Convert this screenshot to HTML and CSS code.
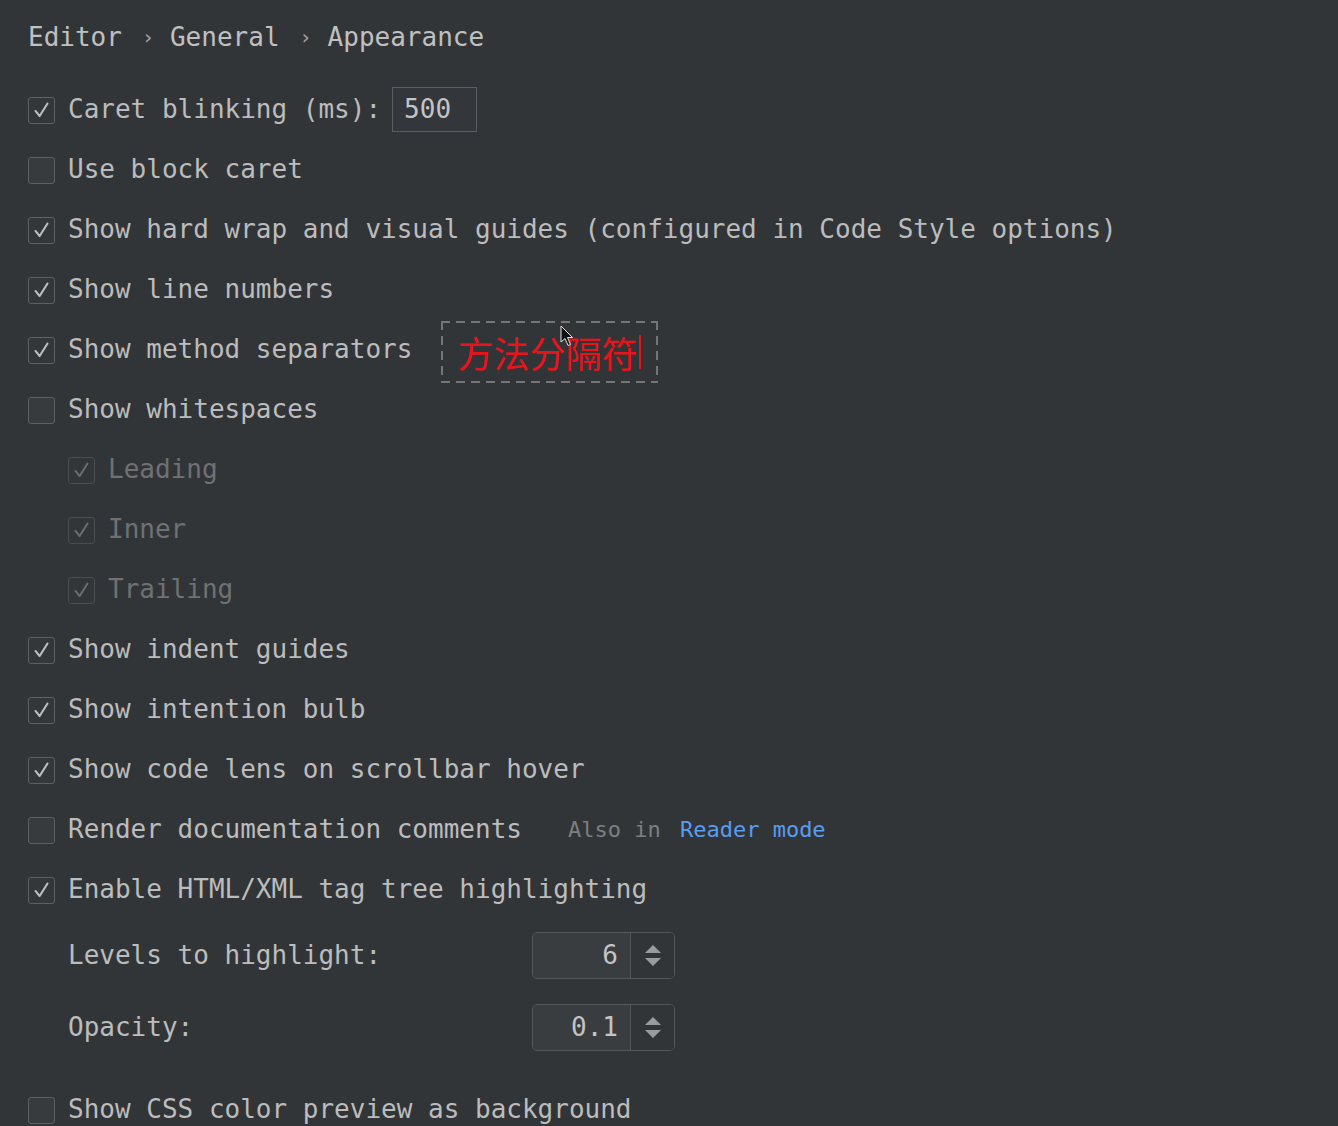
FILE: index.html
```html
<!DOCTYPE html>
<html>
<head>
<meta charset="utf-8">
<link rel="stylesheet" href="styles.css">
</head>
<body>
<div class="page">
  <div class="crumbs">
    <span>Editor</span><span class="sep">›</span><span>General</span><span class="sep">›</span><span>Appearance</span>
  </div>

  <div class="row">
    <span class="cb on"><svg viewBox="0 0 27 27"><polyline points="7,14 11.5,19.5 20,6"/></svg></span>
    <span class="lbl">Caret blinking (ms):</span>
    <span class="field">500</span>
  </div>
  <div class="row">
    <span class="cb"></span>
    <span class="lbl">Use block caret</span>
  </div>
  <div class="row">
    <span class="cb on"><svg viewBox="0 0 27 27"><polyline points="7,14 11.5,19.5 20,6"/></svg></span>
    <span class="lbl">Show hard wrap and visual guides (configured in Code Style options)</span>
  </div>
  <div class="row">
    <span class="cb on"><svg viewBox="0 0 27 27"><polyline points="7,14 11.5,19.5 20,6"/></svg></span>
    <span class="lbl">Show line numbers</span>
  </div>
  <div class="row">
    <span class="cb on"><svg viewBox="0 0 27 27"><polyline points="7,14 11.5,19.5 20,6"/></svg></span>
    <span class="lbl">Show method separators</span>
    <span class="note">方法分隔符<span class="caret"></span>
      <svg class="pointer" viewBox="0 0 14 22"><path d="M1 1 L1 17 L5 13.5 L8 20.5 L10.5 19.5 L7.5 12.5 L12.5 12.5 Z"/></svg>
    </span>
  </div>
  <div class="row">
    <span class="cb"></span>
    <span class="lbl">Show whitespaces</span>
  </div>
  <div class="row sub dis">
    <span class="cb on"><svg viewBox="0 0 27 27"><polyline points="7,14 11.5,19.5 20,6"/></svg></span>
    <span class="lbl">Leading</span>
  </div>
  <div class="row sub dis">
    <span class="cb on"><svg viewBox="0 0 27 27"><polyline points="7,14 11.5,19.5 20,6"/></svg></span>
    <span class="lbl">Inner</span>
  </div>
  <div class="row sub dis">
    <span class="cb on"><svg viewBox="0 0 27 27"><polyline points="7,14 11.5,19.5 20,6"/></svg></span>
    <span class="lbl">Trailing</span>
  </div>
  <div class="row">
    <span class="cb on"><svg viewBox="0 0 27 27"><polyline points="7,14 11.5,19.5 20,6"/></svg></span>
    <span class="lbl">Show indent guides</span>
  </div>
  <div class="row">
    <span class="cb on"><svg viewBox="0 0 27 27"><polyline points="7,14 11.5,19.5 20,6"/></svg></span>
    <span class="lbl">Show intention bulb</span>
  </div>
  <div class="row">
    <span class="cb on"><svg viewBox="0 0 27 27"><polyline points="7,14 11.5,19.5 20,6"/></svg></span>
    <span class="lbl">Show code lens on scrollbar hover</span>
  </div>
  <div class="row">
    <span class="cb"></span>
    <span class="lbl">Render documentation comments</span>
    <span class="also">Also in <span class="link">Reader mode</span></span>
  </div>
  <div class="row">
    <span class="cb on"><svg viewBox="0 0 27 27"><polyline points="7,14 11.5,19.5 20,6"/></svg></span>
    <span class="lbl">Enable HTML/XML tag tree highlighting</span>
  </div>

  <div class="row spin-row">
    <span class="spin-lbl">Levels to highlight:</span>
    <span class="spinner">
      <span class="spin-val">6</span>
      <span class="spin-btn"><span class="up"></span><span class="down"></span></span>
    </span>
  </div>
  <div class="row spin-row">
    <span class="spin-lbl">Opacity:</span>
    <span class="spinner">
      <span class="spin-val">0.1</span>
      <span class="spin-btn"><span class="up"></span><span class="down"></span></span>
    </span>
  </div>

  <div class="row last">
    <span class="cb"></span>
    <span class="lbl">Show CSS color preview as background</span>
  </div>
</div>
</body>
</html>
```

FILE: styles.css
```css
html, body {
  margin: 0;
  padding: 0;
  background: #323538;
}
body {
  width: 1338px;
  height: 1126px;
  overflow: hidden;
  font-family: "DejaVu Sans Mono", "Liberation Mono", monospace;
  font-size: 26px;
  color: #bcbcbc;
}
.page {
  padding-left: 28px;
}
.crumbs {
  height: 72px;
  padding-top: 1px;
  margin-bottom: 6px;
  display: flex;
  align-items: center;
  color: #c0c0c0;
}
.crumbs .sep {
  font-size: 20px;
  color: #a0a0a0;
  margin: 0 16px 0 20px;
}
.row {
  height: 60px;
  display: flex;
  align-items: center;
}
.cb {
  width: 27px;
  height: 27px;
  box-sizing: border-box;
  border: 1.5px solid #5e6164;
  border-radius: 3px;
  background: #383b3e;
  flex: none;
  display: flex;
  margin-top: 2px;
}
.cb.on {
  background: #34373a;
}
.cb svg {
  width: 100%;
  height: 100%;
}
.cb polyline {
  fill: none;
  stroke: #c0c0c0;
  stroke-width: 2.2;
  stroke-linecap: round;
  stroke-linejoin: round;
}
.lbl {
  margin-left: 13px;
  white-space: pre;
}
.sub {
  padding-left: 40px;
}
.dis .lbl {
  color: #6f7173;
}
.dis .cb {
  border-color: #4b4e51;
  background: #333639;
}
.dis .cb polyline {
  stroke: #6a6c6e;
}
.field {
  margin-left: 11px;
  width: 85px;
  height: 45px;
  box-sizing: border-box;
  border: 1.5px solid #5c5f62;
  background: #33363a;
  padding-left: 11px;
  display: flex;
  align-items: center;
  color: #c4c4c4;
}
.note {
  position: relative;
  margin-left: 29px;
  margin-top: 6px;
  width: 217px;
  height: 62px;
  box-sizing: border-box;
  padding-left: 16px;
  display: flex;
  align-items: center;
  font-family: "Noto Sans CJK SC", sans-serif;
  font-size: 36px;
  color: #e8141b;
  background:
    repeating-linear-gradient(90deg, #747576 0 9px, transparent 9px 15px) left top / 100% 2px no-repeat,
    repeating-linear-gradient(90deg, #747576 0 9px, transparent 9px 15px) left bottom / 100% 2px no-repeat,
    repeating-linear-gradient(180deg, #747576 0 9px, transparent 9px 15px) left top / 2px 100% no-repeat,
    repeating-linear-gradient(180deg, #747576 0 9px, transparent 9px 15px) right top / 2px 100% no-repeat;
}
.caret {
  width: 2px;
  height: 34px;
  background: #e8141b;
  margin-left: 2px;
}
.pointer {
  position: absolute;
  left: 119px;
  top: 4px;
  width: 14px;
  height: 22px;
}
.pointer path {
  fill: #111;
  stroke: #e0e0e0;
  stroke-width: 1;
}
.also {
  margin-left: 46px;
  font-size: 22px;
  color: #7c7e80;
}
.link {
  color: #5a9cf0;
  margin-left: 6px;
}
.spin-row {
  height: 72px;
  padding-left: 40px;
}
.spin-lbl {
  width: 464px;
  flex: none;
}
.spinner {
  width: 143px;
  height: 47px;
  box-sizing: border-box;
  border: 1.5px solid #55585b;
  border-radius: 5px;
  display: flex;
  overflow: hidden;
}
.spin-val {
  width: 98px;
  box-sizing: border-box;
  background: #3a3d40;
  border-right: 1.5px solid #55585b;
  display: flex;
  align-items: center;
  justify-content: flex-end;
  padding-right: 12px;
  color: #c4c4c4;
}
.spin-btn {
  flex: 1;
  display: flex;
  flex-direction: column;
  align-items: center;
  justify-content: center;
  gap: 5px;
  background: #323538;
}
.up {
  width: 0;
  height: 0;
  border-left: 8.5px solid transparent;
  border-right: 8.5px solid transparent;
  border-bottom: 8px solid #9a9b9c;
}
.down {
  width: 0;
  height: 0;
  border-left: 8.5px solid transparent;
  border-right: 8.5px solid transparent;
  border-top: 8px solid #9a9b9c;
}
.last {
  margin-top: 16px;
}
```
